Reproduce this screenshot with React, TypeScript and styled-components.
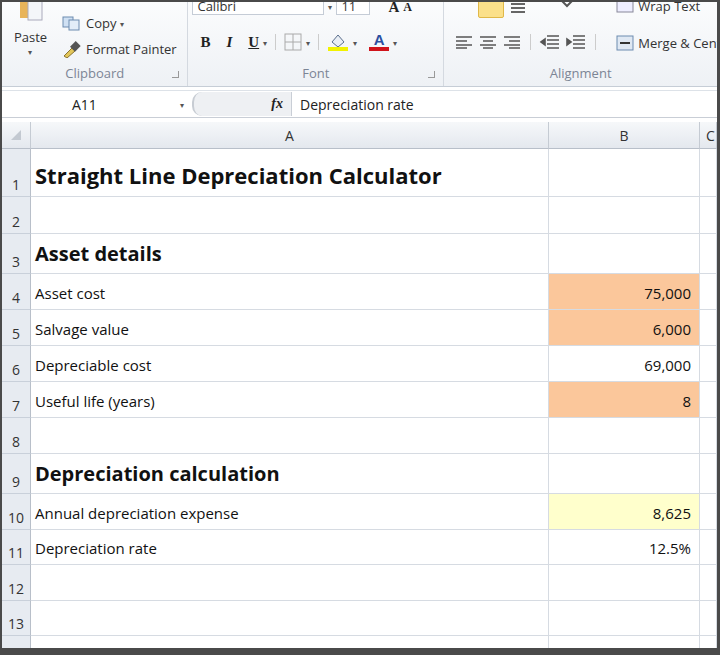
import React from "react";
import styled, { createGlobalStyle } from "styled-components";

const Global = createGlobalStyle`
  html, body { margin: 0; padding: 0; background: #4a4a4a; }
  body { font-family: "Open Sans", "Liberation Sans", sans-serif; }
`;

const Frame = styled.div`
  width: 715px; height: 646px; margin: 2px 0 0 2px;
  background: #fff; overflow: hidden; display: flex; flex-direction: column;
  & > * { flex-shrink: 0; }
`;
const Ribbon = styled.div`
  height: 84px; display: flex; background: linear-gradient(#fbfcfd, #eef1f5);
  border-bottom: 1px solid #c6cdd6; font-size: 13px; color: #333;
`;
const Group = styled.div<{ w: number }>`
  width: ${p => p.w}px; border-right: 1px solid #d4d9e0; display: flex; flex-direction: column;
  position: relative;
`;
const GroupBody = styled.div`flex: 1; display: flex; position: relative;`;
const GroupLabel = styled.div`
  height: 22px; text-align: center; color: #7c8595; font-size: 13px; line-height: 18px;
`;
const Launcher = styled.span`
  position: absolute; right: 8px; bottom: 8px; width: 6px; height: 6px;
  border-right: 1px solid #999; border-bottom: 1px solid #999;
`;
const Abs = styled.div<{ x: number; y: number }>`
  position: absolute; left: ${p => p.x}px; top: ${p => p.y}px; display: flex; align-items: center; gap: 4px; white-space: nowrap;
`;
const Tool = styled.span<{ i?: boolean; u?: boolean }>`
  font-family: "Liberation Serif", serif; font-size: 15px; font-weight: bold;
  font-style: ${p => (p.i ? "italic" : "normal")}; text-decoration: ${p => (p.u ? "underline" : "none")};
  color: #222;
`;
const Arrow = styled.span`font-size: 8px; color: #555;`;
const Sep = styled.span`width: 1px; height: 16px; background: #ccc; margin: 0 4px;`;
const Field = styled.div<{ w: number }>`
  width: ${p => p.w}px; height: 16px; background: #fff; border: 1px solid #c5ccd6; padding-left: 4px; font-size: 13px; line-height: 16px;
`;

const FormulaBar = styled.div`
  height: 26px; margin-top: 3px; display: flex; align-items: center; background: #fff;
  border-top: 1px solid #dde2e8; border-bottom: 1px solid #c9ced6; font-size: 14px; color: #222;
`;
const NameBox = styled.div`
  width: 190px; display: flex; justify-content: space-between; align-items: center; padding: 0 8px 0 70px; box-sizing: border-box;
`;
const FxArea = styled.div`
  width: 100px; height: 24px; display: flex; align-items: center; justify-content: flex-end; padding-right: 8px; box-sizing: border-box;
  background: #eef0f3; border-left: 2px solid #c7ccd3; border-radius: 10px 0 0 10px;
  border-right: 1px solid #c9ced6; font-family: "Liberation Serif", serif; font-style: italic; font-weight: bold;
`;
const Formula = styled.div`padding-left: 8px;`;

const Grid = styled.div`
  margin-top: 4px; display: grid; grid-template-columns: 29px 518px 151px 1fr;
  font-family: "Open Sans", "Liberation Sans", sans-serif; color: #111;
`;
const ColHead = styled.div`
  height: 26px; background: linear-gradient(#f6f8fa, #e4e8ee); border-right: 1px solid #c5cbd3;
  border-bottom: 1px solid #b8bfc9; display: flex; align-items: center; justify-content: center;
  font-size: 14px; color: #333;
`;
const RowHead = styled.div<{ h: number }>`
  height: ${p => p.h}px; background: #e7ebf1; border-right: 1px solid #b8bfc9; border-bottom: 1px solid #c9d0da;
  display: flex; align-items: flex-end; justify-content: center; padding-bottom: 2px; box-sizing: border-box;
  font-size: 14px; color: #333;
`;
const Cell = styled.div<{ h: number; bg?: string; right?: boolean; size?: number; bold?: boolean }>`
  height: ${p => p.h}px; box-sizing: border-box; border-right: 1px solid #d6dbe2; border-bottom: 1px solid #d6dbe2;
  background: ${p => p.bg || "#fff"}; display: flex; align-items: flex-end;
  justify-content: ${p => (p.right ? "flex-end" : "flex-start")}; padding: 0 8px 6px 4px;
  font-size: ${p => p.size || 15}px; font-weight: ${p => (p.bold ? 700 : 400)}; white-space: nowrap;
`;

const orange = "#fbc79b";
const yellow = "#ffffcc";
type Row = [number, number, string, string, string?, number?];
const rows: Row[] = [
  [1, 48, "Straight Line Depreciation Calculator", "", undefined, 22],
  [2, 37, "", ""],
  [3, 40, "Asset details", "", undefined, 20],
  [4, 36, "Asset cost", "75,000", orange],
  [5, 36, "Salvage value", "6,000", orange],
  [6, 36, "Depreciable cost", "69,000"],
  [7, 36, "Useful life (years)", "8", orange],
  [8, 36, "", ""],
  [9, 40, "Depreciation calculation", "", undefined, 20],
  [10, 36, "Annual depreciation expense", "8,625", yellow],
  [11, 35, "Depreciation rate", "12.5%"],
  [12, 36, "", ""],
  [13, 35, "", ""],
  [14, 36, "", ""],
];

export default function App() {
  return (
    <>
      <Global />
      <Frame>
        <Ribbon>
          <Group w={187}>
            <GroupBody>
              <Abs x={14} y={-4}>
                <svg width="30" height="24"><rect x="4" y="0" width="10" height="20" fill="#e8b45a" /><rect x="12" y="0" width="14" height="22" fill="#f4f6f9" stroke="#aab" /></svg>
              </Abs>
              <Abs x={12} y={26}>Paste</Abs>
              <Abs x={26} y={44}><Arrow>▾</Arrow></Abs>
              <Abs x={60} y={12}>
                <svg width="20" height="16"><rect x="1" y="2" width="10" height="10" fill="#cfe0f3" stroke="#6c8bb0" /><rect x="7" y="5" width="10" height="10" fill="#e3edf8" stroke="#6c8bb0" /></svg>
                Copy <Arrow>▾</Arrow>
              </Abs>
              <Abs x={60} y={38}>
                <svg width="20" height="18"><path d="M2 16 L10 8 L13 11 L5 18Z" fill="#e2c65a" stroke="#8a7330" /><rect x="10" y="2" width="7" height="8" fill="#555" transform="rotate(45 13 6)" /></svg>
                Format Painter
              </Abs>
            </GroupBody>
            <GroupLabel>Clipboard</GroupLabel>
            <Launcher />
          </Group>
          <Group w={257}>
            <GroupBody>
              <Abs x={4} y={-5}>
                <Field w={126}>Calibri</Field>
                <Arrow>▾</Arrow>
                <Field w={28}>11</Field>
              </Abs>
              <Abs x={200} y={-3}><Tool>A</Tool><Tool style={{ fontSize: 12 }}>A</Tool></Abs>
              <Abs x={12} y={30}>
                <Tool>B</Tool><span style={{ width: 8 }} /><Tool i>I</Tool><span style={{ width: 8 }} /><Tool u>U</Tool><Arrow>▾</Arrow>
                <Sep />
                <svg width="18" height="18"><rect x="1" y="1" width="16" height="16" fill="none" stroke="#aaa" /><path d="M9 1V17M1 9H17" stroke="#aaa" /></svg><Arrow>▾</Arrow>
                <Sep />
                <svg width="22" height="20"><path d="M5 10 L11 3 L17 10 L11 15Z" fill="#e9eef5" stroke="#5a6e8c" /><rect x="1" y="15" width="20" height="4" fill="#f2f200" /></svg><Arrow>▾</Arrow>
                <span style={{ width: 4 }} />
                <span style={{ display: "flex", flexDirection: "column", alignItems: "center" }}>
                  <Tool style={{ fontFamily: "Liberation Sans, sans-serif", color: "#2b4fa0", lineHeight: "14px" }}>A</Tool>
                  <span style={{ width: 20, height: 4, background: "#d0131b" }} />
                </span>
                <Arrow>▾</Arrow>
              </Abs>
            </GroupBody>
            <GroupLabel>Font</GroupLabel>
            <Launcher />
          </Group>
          <Group w={275} style={{ borderRight: "none" }}>
            <GroupBody>
              <Abs x={34} y={-4}>
                <span style={{ width: 24, height: 18, background: "#fbe08a", border: "1px solid #e0b848", borderRadius: 2 }} />
                <svg width="20" height="14"><path d="M3 3H17M3 7H17M3 11H17" stroke="#666" strokeWidth="2" /></svg>
              </Abs>
              <Abs x={10} y={32}>
                <svg width="20" height="14"><path d="M2 2H18M2 6H13M2 10H18M2 13H13" stroke="#555" strokeWidth="1.6" /></svg>
                <svg width="20" height="14"><path d="M2 2H18M5 6H15M2 10H18M5 13H15" stroke="#555" strokeWidth="1.6" /></svg>
                <svg width="20" height="14"><path d="M2 2H18M7 6H18M2 10H18M7 13H18" stroke="#555" strokeWidth="1.6" /></svg>
                <Sep />
                <svg width="22" height="16"><path d="M8 2H20M8 6H20M8 10H20M8 14H20M2 8L6 5V11Z" stroke="#555" strokeWidth="1.6" fill="#555" /></svg>
                <svg width="22" height="16"><path d="M8 2H20M8 6H20M8 10H20M8 14H20M6 8L2 5V11Z" stroke="#555" strokeWidth="1.6" fill="#555" /></svg>
                <Sep />
              </Abs>
              <Abs x={115} y={-6}>
                <svg width="16" height="16"><path d="M2 4L8 10L14 4" stroke="#555" fill="none" strokeWidth="2" /></svg>
              </Abs>
              <Abs x={172} y={-5}>
                <svg width="18" height="14"><rect x="1" y="1" width="16" height="12" fill="#eef" stroke="#889" /></svg>
                <span style={{ color: "#333" }}>Wrap Text</span>
              </Abs>
              <Abs x={172} y={32}>
                <svg width="18" height="16"><rect x="1" y="1" width="16" height="14" fill="#dfe8f3" stroke="#6c8bb0" /><path d="M4 8H14" stroke="#333" strokeWidth="2" /></svg>
                <span style={{ color: "#333" }}>Merge &amp; Center</span>
              </Abs>
            </GroupBody>
            <GroupLabel>Alignment</GroupLabel>
          </Group>
        </Ribbon>
        <FormulaBar>
          <NameBox><span>A11</span><Arrow>▾</Arrow></NameBox>
          <FxArea>fx</FxArea>
          <Formula>Depreciation rate</Formula>
        </FormulaBar>
        <Grid>
          <ColHead>
            <svg width="12" height="12"><path d="M11 1V11H1Z" fill="#c3c9d1" /></svg>
          </ColHead>
          <ColHead>A</ColHead>
          <ColHead>B</ColHead>
          <ColHead style={{ justifyContent: "flex-start", paddingLeft: 6 }}>C</ColHead>
          {rows.map(([n, h, a, b, bg, size]) => (
            <React.Fragment key={n}>
              <RowHead h={h}>{n}</RowHead>
              <Cell h={h} size={size} bold={!!size}>{a}</Cell>
              <Cell h={h} bg={bg} right>{b}</Cell>
              <Cell h={h} />
            </React.Fragment>
          ))}
        </Grid>
      </Frame>
    </>
  );
}
